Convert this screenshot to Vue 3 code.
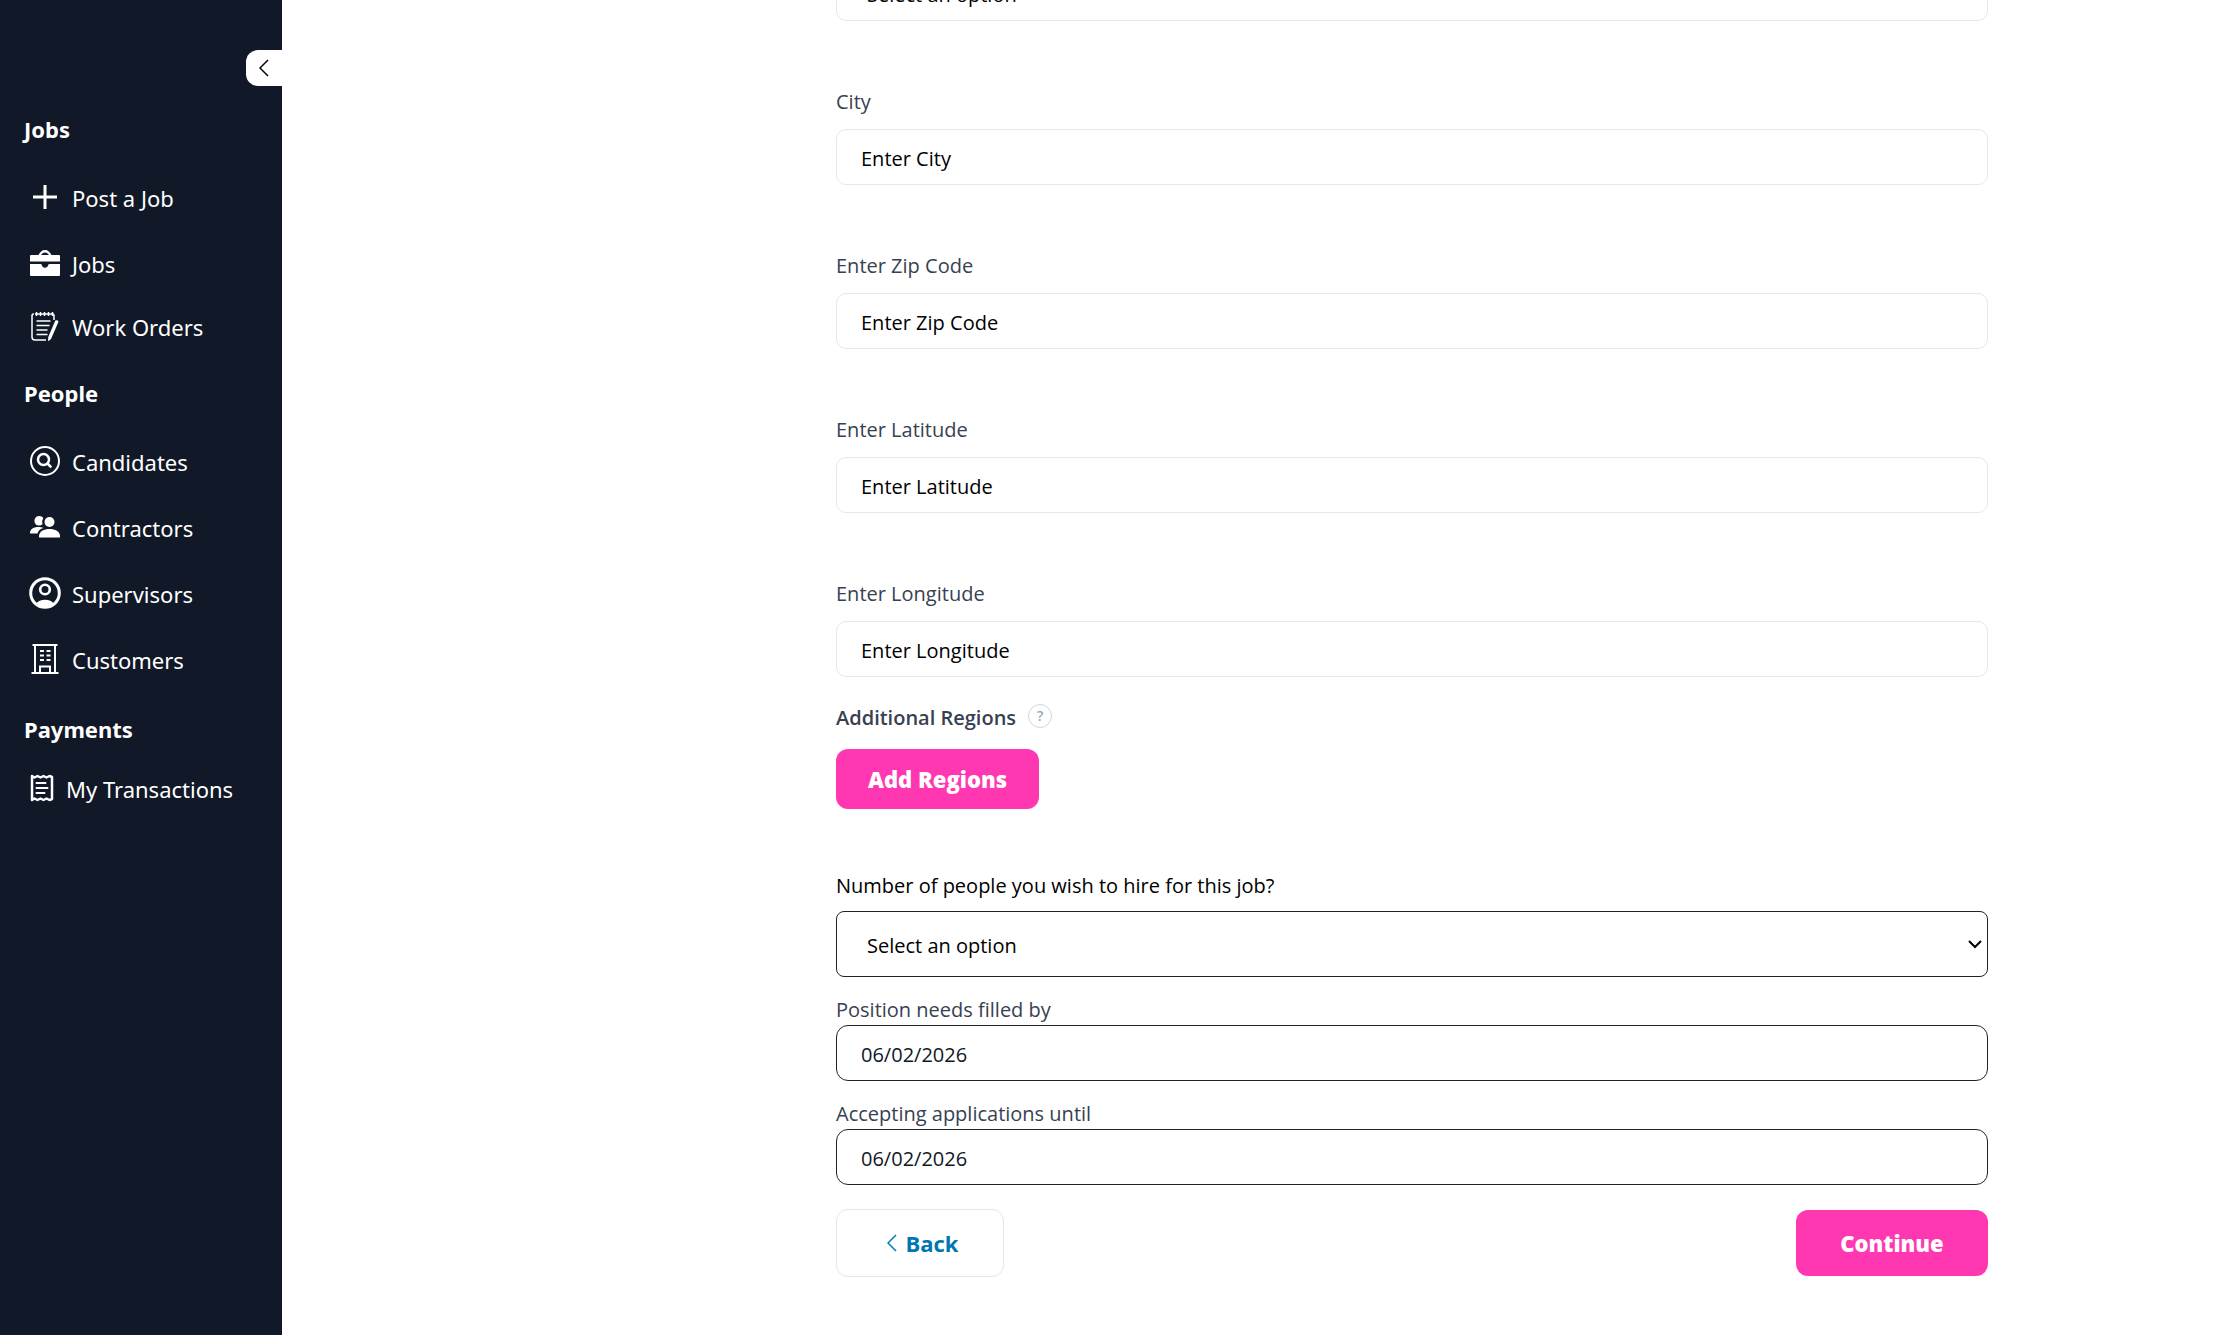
<script setup>
import { ref } from 'vue'

const sections = [
  {
    title: 'Jobs',
    items: [
      { label: 'Post a Job', icon: 'plus' },
      { label: 'Jobs', icon: 'briefcase' },
      { label: 'Work Orders', icon: 'notes', size: 'medium' },
    ],
  },
  {
    title: 'People',
    items: [
      { label: 'Candidates', icon: 'search' },
      { label: 'Contractors', icon: 'people' },
      { label: 'Supervisors', icon: 'account' },
      { label: 'Customers', icon: 'building' },
    ],
  },
  {
    title: 'Payments',
    roomy: true,
    items: [{ label: 'My Transactions', icon: 'receipt', size: 'small' }],
  },
]

const fields = [
  { id: 'city', label: 'City', placeholder: 'Enter City' },
  { id: 'zip', label: 'Enter Zip Code', placeholder: 'Enter Zip Code' },
  { id: 'latitude', label: 'Enter Latitude', placeholder: 'Enter Latitude' },
  { id: 'longitude', label: 'Enter Longitude', placeholder: 'Enter Longitude' },
]

const filledBy = ref('06/02/2026')
const acceptingUntil = ref('06/02/2026')
</script>

<template>
  <div class="page">
    <aside class="sidebar">
      <button class="toggle" type="button" aria-label="Collapse menu">
        <svg width="10" height="18" viewBox="0 0 10 18"><path d="M9 1 1 9l8 8" /></svg>
      </button>
      <nav>
        <section v-for="s in sections" :key="s.title">
          <h2 :class="{ roomy: s.roomy }">{{ s.title }}</h2>
          <ul>
            <li v-for="item in s.items" :key="item.label">
              <a href="#" :class="item.size">
                <span class="slot">
                  <svg v-if="item.icon === 'plus'" width="24" height="24" viewBox="0 0 24 24" class="line w3">
                    <path d="M12 0v24M0 12h24" />
                  </svg>
                  <svg v-else-if="item.icon === 'briefcase'" width="30" height="26" viewBox="0 0 30 26" class="solid">
                    <path d="M1 5h7.500C10 2 12 0 15 0s5 2 6.500 5H29q1 0 1 1v5.500H0V6q0-1 1-1zM11 5h8c-1-1.700-2.300-2.600-4-2.600S12 3.300 11 5z" />
                    <path d="M0 14h10.500q1 0 1.300 1c.5 1.700 1.500 2.800 3.200 2.800s2.700-1.100 3.200-2.800q.3-1 1.300-1H30v11q0 1-1 1H1q-1 0-1-1z" />
                  </svg>
                  <svg v-else-if="item.icon === 'notes'" width="28" height="30" viewBox="0 0 28 30" class="line w1">
                    <path d="M3 3H2.500Q1 3 1 5v21q0 3 3 3h11M21 3h.5Q23 3 23 5v4" />
                    <path d="M4 3h17M5.500 1v4M9.500 1v4M13.500 1v4M17.500 1v4M21.500 1v4" />
                    <path d="M5.500 10h14M5.500 14.500h13M5.500 19h11M5.500 23.500h11" />
                    <path d="M24.300 9.500q2.500-.8 3.200 1.200l-7.500 17.300-2.300 2-.7-.5.3-3.500z" class="solid" />
                  </svg>
                  <svg v-else-if="item.icon === 'search'" width="30" height="30" viewBox="0 0 30 30" class="line w2">
                    <circle cx="15" cy="15" r="14" />
                    <circle cx="13.500" cy="13.500" r="5.500" stroke-width="2.500" />
                    <path d="m17.500 17.500 3.800 3.800" stroke-width="2.500" />
                  </svg>
                  <svg v-else-if="item.icon === 'people'" width="30" height="24" viewBox="0 0 30 24" class="solid">
                    <path d="M9 1a4.800 4.800 0 1 0 3.500 8.200A7 7 0 0 1 13.300 3 4.800 4.800 0 0 0 9 1zM0 18c0-4 4-6 8-6 2 0 4 .3 5.500 1C10 14 8.500 15.500 7.500 18.500H1q-1 0-1-.5z" />
                    <circle cx="19.500" cy="7" r="5" />
                    <path d="M9 21c0-4.500 5-7 10.500-7S30 16.500 30 21v1q0 .5-1 .5H10q-1 0-1-.5z" />
                  </svg>
                  <svg v-else-if="item.icon === 'account'" width="32" height="32" viewBox="0 0 32 32" class="line w3">
                    <circle cx="16" cy="16" r="14.300" />
                    <circle cx="16" cy="12.500" r="4.800" stroke-width="2.600" />
                    <path d="M7 27c2-3 5-4.300 9-4.300s7 1.300 9 4.300c-5 4-13 4-18 0z" class="solid" />
                  </svg>
                  <svg v-else-if="item.icon === 'building'" width="28" height="30" viewBox="0 0 28 30" class="line w2">
                    <path d="M1.500 1h25M4 1v28M24 1v28M.5 29h27M9 29v-6.500h10V29" />
                    <path d="M9 7h4M15.500 7h4M9 11.500h4M15.500 11.500h4M9 16h4M15.500 16h4" />
                  </svg>
                  <svg v-else width="24" height="28" viewBox="0 0 24 28" class="line w2">
                    <path d="M2 2l2.500 1.500L7.500 2l3 1.500 3-1.500 3 1.500 3-1.500L22 3v22l-2.500 1-3-1.500-3 1.500-3-1.500-3 1.500-3-1.500L2 26z" stroke-width="2.500" stroke-linejoin="round" />
                    <path d="M6.500 9h9M6.500 14h11M6.500 19h8" stroke-linecap="round" />
                  </svg>
                </span>
                {{ item.label }}
              </a>
            </li>
          </ul>
        </section>
      </nav>
    </aside>

    <main>
      <form @submit.prevent>
        <div class="select-wrap">
          <select class="control pale" aria-label="State">
            <option>Select an option</option>
          </select>
        </div>

        <div v-for="f in fields" :key="f.id" class="field">
          <label :for="f.id">{{ f.label }}</label>
          <input :id="f.id" class="control pale" type="text" :placeholder="f.placeholder" />
        </div>

        <div class="regions">
          <span class="regions-title">Additional Regions</span>
          <button class="help" type="button" aria-label="About additional regions">?</button>
        </div>
        <button class="pink add" type="button">Add Regions</button>

        <div class="field hires">
          <label for="hires">Number of people you wish to hire for this job?</label>
          <div class="select-wrap">
            <select id="hires" class="control">
              <option>Select an option</option>
            </select>
            <svg class="caret" width="14" height="9" viewBox="0 0 14 9"><path d="m1 1 6 6 6-6" /></svg>
          </div>
        </div>
        <div class="field date">
          <label for="filled">Position needs filled by</label>
          <input id="filled" v-model="filledBy" class="control" type="text" />
        </div>
        <div class="field date">
          <label for="until">Accepting applications until</label>
          <input id="until" v-model="acceptingUntil" class="control" type="text" />
        </div>

        <div class="actions">
          <button class="back" type="button">
            <svg width="10" height="18" viewBox="0 0 10 18"><path d="M9 1 1 9l8 8" /></svg>
            Back
          </button>
          <button class="pink continue" type="submit">Continue</button>
        </div>
      </form>
    </main>
  </div>
</template>

<style>
body {
  background: #fff;
}
</style>

<style scoped>
.page {
  display: flex;
  min-height: 100vh;
  font-family: "Open Sans", "Noto Sans", sans-serif;
  font-size: 20px;
  line-height: 30px;
  color: #000;
}
.page * {
  box-sizing: border-box;
}
button,
input,
select {
  font: inherit;
  margin: 0;
}

.sidebar {
  position: relative;
  flex: none;
  width: 282px;
  padding-top: 95px;
  background: #111827;
  color: #fff;
  font-family: "Noto Sans", "Open Sans", sans-serif;
  font-size: 22px;
}
.toggle {
  position: absolute;
  top: 50px;
  right: 0;
  display: flex;
  align-items: center;
  justify-content: center;
  width: 36px;
  height: 36px;
  padding: 0;
  border: 0;
  border-radius: 12px 0 0 12px;
  background: #fff;
}
.toggle svg {
  fill: none;
  stroke: #000;
  stroke-width: 1.5;
}
h2 {
  display: flex;
  align-items: center;
  height: 70px;
  margin: 0;
  padding: 0 0 3px 24px;
  font-size: 22px;
  font-weight: 700;
}
h2.roomy {
  height: 74px;
}
ul {
  margin: 0;
  padding: 0;
  list-style: none;
}
.sidebar a {
  display: flex;
  align-items: center;
  gap: 12px;
  height: 66px;
  padding-left: 30px;
  color: inherit;
  text-decoration: none;
}
.sidebar a.medium {
  height: 62px;
  padding-bottom: 2px;
}
.sidebar a.small {
  height: 44px;
}
.slot {
  display: flex;
  flex: none;
  align-items: center;
  justify-content: center;
  width: 30px;
  padding-bottom: 2px;
}
.small .slot {
  width: 24px;
}
.slot svg {
  flex: none;
}
.line {
  fill: none;
  stroke: #fff;
}
.solid {
  fill: #fff;
  stroke: none;
}
.w1 {
  stroke-width: 1.5;
}
.w2 {
  stroke-width: 2;
}
.w3 {
  stroke-width: 3;
}

main {
  flex: 1;
  min-width: 0;
  overflow: hidden;
  padding-left: 329px;
}
form {
  max-width: 1152px;
  margin: -35px auto 58px;
}
.field {
  display: flex;
  flex-direction: column;
  gap: 12px;
  margin-top: 66px;
}
.field label {
  color: #374151;
}
.control {
  display: block;
  width: 100%;
  height: 56px;
  padding: 2px 24px 0;
  border: 1px solid #222;
  border-radius: 12px;
  background: #fff;
  color: #111827;
  outline: none;
  appearance: none;
}
.control::placeholder {
  color: #000;
  opacity: 1;
}
.pale {
  border-color: #e5e7eb;
  border-radius: 10px;
}
select.control {
  padding: 3px 30px 0;
  color: #000;
}
.select-wrap {
  position: relative;
}
.caret {
  position: absolute;
  top: 29px;
  right: 6px;
  fill: none;
  stroke: #000;
  stroke-width: 2;
  pointer-events: none;
}
.regions {
  display: flex;
  align-items: flex-start;
  gap: 12px;
  margin: 26px 0 16px;
}
.regions-title {
  color: #374151;
  font-weight: 600;
}
.help {
  width: 24px;
  height: 24px;
  margin-top: 1px;
  padding: 0;
  border: 1px solid #d1d5db;
  border-radius: 50%;
  background: #fff;
  color: #9ca3af;
  font-size: 14px;
  font-weight: 600;
  line-height: 22px;
}
.pink {
  border: 0;
  border-radius: 12px;
  background: #ff38b1;
  color: #fff;
  font-size: 22px;
  font-weight: 800;
}
.add {
  display: block;
  width: 203px;
  height: 60px;
  padding: 0;
}
.hires {
  gap: 10px;
  margin-top: 62px;
}
.hires label {
  color: #000;
}
.hires .control {
  height: 66px;
  border-radius: 8px;
}
.date {
  gap: 0;
  margin-top: 18px;
}
.actions {
  display: flex;
  align-items: center;
  justify-content: space-between;
  margin-top: 24px;
}
.back {
  display: flex;
  align-items: center;
  justify-content: center;
  gap: 8px;
  width: 168px;
  height: 68px;
  padding: 0 0 0 6px;
  border: 1px solid #e5e5e5;
  border-radius: 12px;
  background: #fff;
  color: #0077b0;
  font-size: 22px;
  font-weight: 700;
}
.back svg {
  fill: none;
  stroke: currentColor;
  stroke-width: 1.5;
}
.continue {
  width: 192px;
  height: 66px;
}
</style>
